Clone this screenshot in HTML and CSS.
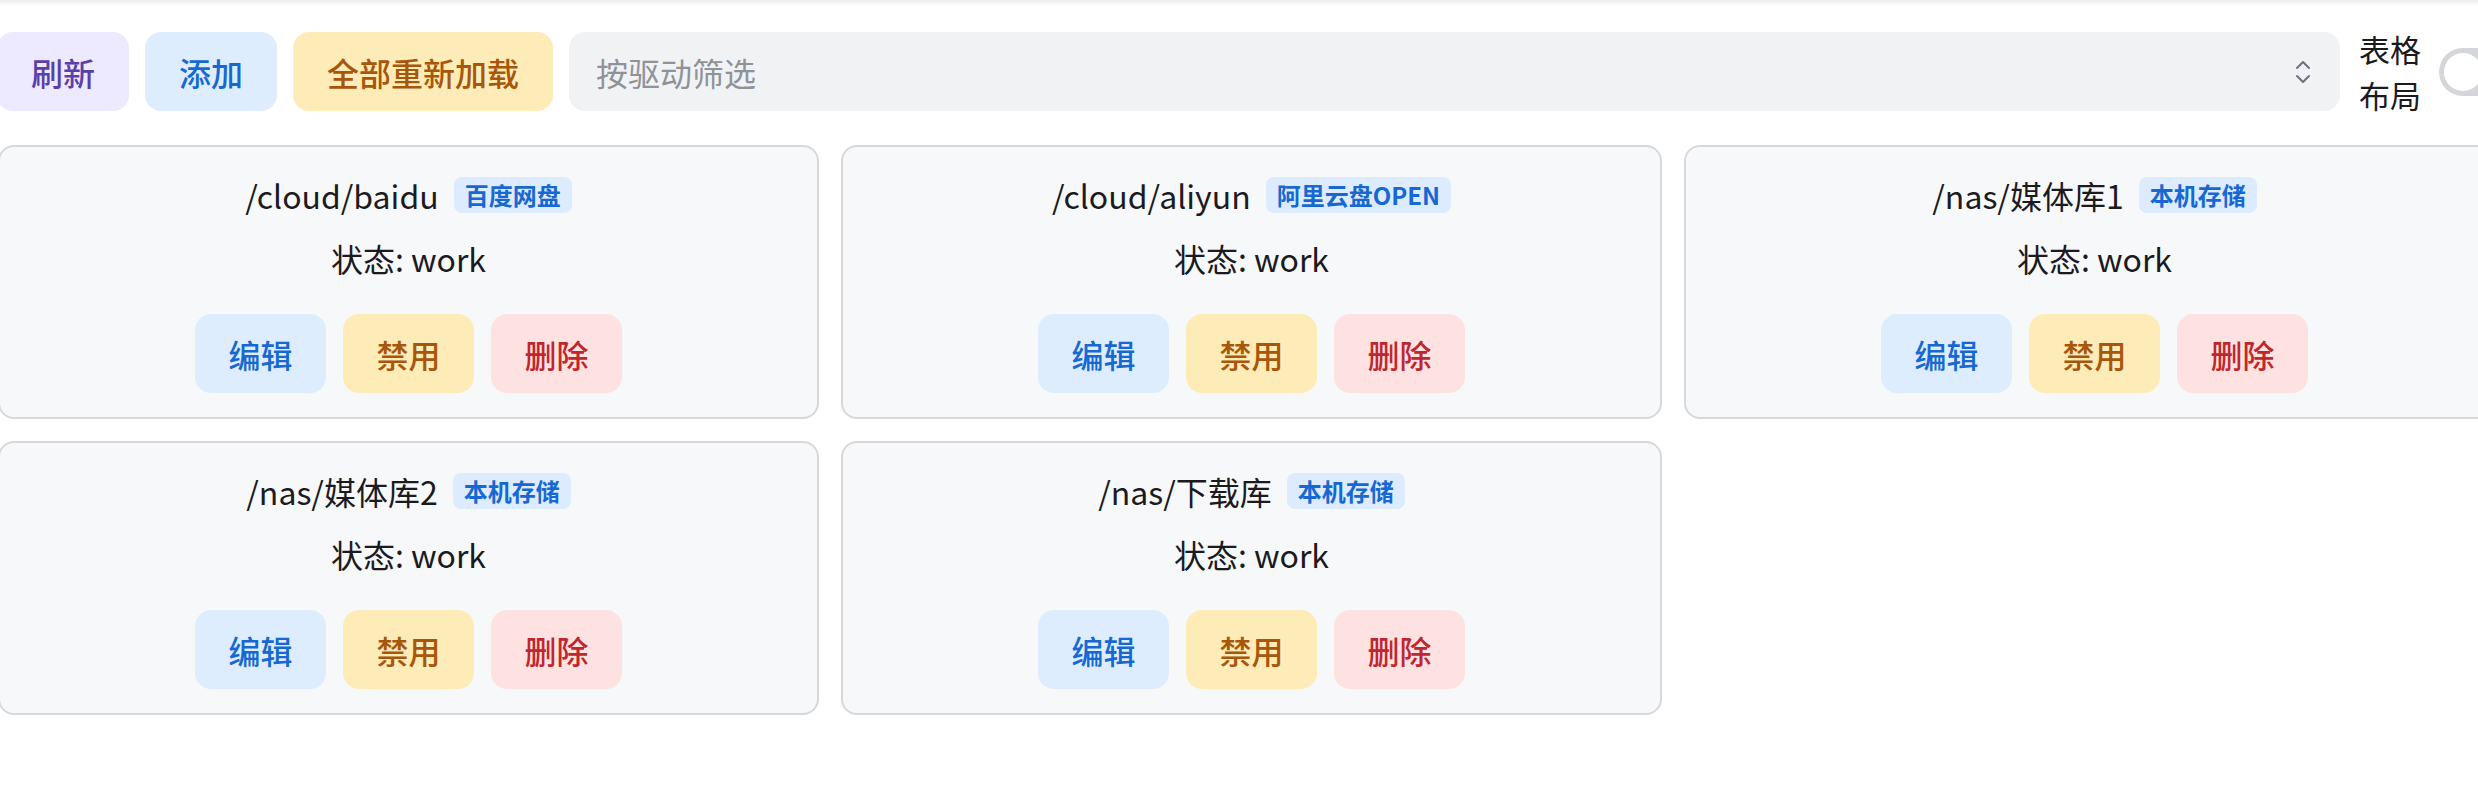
FILE: index.html
```html
<!DOCTYPE html>
<html lang="zh">
<head>
    <meta charset="utf-8">
    <title>存储管理</title>
    <link rel="stylesheet" href="styles.css">
</head>
<body>
<div class="topbar"></div>
<div class="container">
    <div class="toolbar">
        <button class="btn btn-purple">刷新</button>
        <button class="btn btn-blue">添加</button>
        <button class="btn btn-amber">全部重新加载</button>
        <div class="filter">
            <span class="filter-placeholder">按驱动筛选</span>
            <svg class="filter-chevron" width="16" height="24" viewBox="0 0 16 24" fill="none" stroke="#6b7280" stroke-width="2" stroke-linecap="round" stroke-linejoin="round">
                <path d="M2 8 L8 2 L14 8"/>
                <path d="M2 16 L8 22 L14 16"/>
            </svg>
        </div>
        <label class="layout-label" for="layout-toggle">表格布局</label>
        <div class="toggle" id="layout-toggle"><span class="toggle-knob"></span></div>
    </div>

    <div class="storage-grid">
        <div class="storage-card">
            <div class="card-title">
                <span>/cloud/baidu</span>
                <span class="tag">百度网盘</span>
            </div>
            <p class="card-status">状态: work</p>
            <div class="card-actions">
                <button class="btn btn-blue">编辑</button>
                <button class="btn btn-amber">禁用</button>
                <button class="btn btn-red">删除</button>
            </div>
        </div>
        <div class="storage-card">
            <div class="card-title">
                <span>/cloud/aliyun</span>
                <span class="tag">阿里云盘OPEN</span>
            </div>
            <p class="card-status">状态: work</p>
            <div class="card-actions">
                <button class="btn btn-blue">编辑</button>
                <button class="btn btn-amber">禁用</button>
                <button class="btn btn-red">删除</button>
            </div>
        </div>
        <div class="storage-card">
            <div class="card-title">
                <span>/nas/媒体库1</span>
                <span class="tag">本机存储</span>
            </div>
            <p class="card-status">状态: work</p>
            <div class="card-actions">
                <button class="btn btn-blue">编辑</button>
                <button class="btn btn-amber">禁用</button>
                <button class="btn btn-red">删除</button>
            </div>
        </div>
        <div class="storage-card">
            <div class="card-title">
                <span>/nas/媒体库2</span>
                <span class="tag">本机存储</span>
            </div>
            <p class="card-status">状态: work</p>
            <div class="card-actions">
                <button class="btn btn-blue">编辑</button>
                <button class="btn btn-amber">禁用</button>
                <button class="btn btn-red">删除</button>
            </div>
        </div>
        <div class="storage-card">
            <div class="card-title">
                <span>/nas/下载库</span>
                <span class="tag">本机存储</span>
            </div>
            <p class="card-status">状态: work</p>
            <div class="card-actions">
                <button class="btn btn-blue">编辑</button>
                <button class="btn btn-amber">禁用</button>
                <button class="btn btn-red">删除</button>
            </div>
        </div>
    </div>
</div>
</body>
</html>
```

FILE: styles.css
```css
body {
    margin: 0;
    background-color: #fff;
    font-family: "Noto Sans CJK SC", "Noto Sans", sans-serif;
    color: #1b1b1f;
    overflow: hidden;
}
.topbar {
    height: 6px;
    background: linear-gradient(#ececec, #fff);
}
.container {
    width: 2522px;
    margin-left: -3px;
    margin-top: 26px;
}
.toolbar {
    display: flex;
    align-items: center;
    gap: 16px;
    height: 79px;
}
.btn {
    height: 79px;
    padding: 0 34px;
    border: none;
    border-radius: 16px;
    font-family: inherit;
    font-size: 32px;
    font-weight: 500;
    cursor: pointer;
}
.btn-purple {
    background-color: #ede9fe;
    color: #5b3ea8;
}
.btn-blue {
    background-color: #ddedfe;
    color: #1768d2;
}
.btn-amber {
    background-color: #fdebb8;
    color: #a8560a;
}
.btn-red {
    background-color: #fee2e2;
    color: #c0262d;
}
.filter {
    flex: 1;
    height: 79px;
    display: flex;
    align-items: center;
    justify-content: space-between;
    padding: 0 29px 0 27px;
    background-color: #f1f2f4;
    border-radius: 16px;
}
.filter-placeholder {
    font-size: 32px;
    color: #8e9299;
}
.layout-label {
    width: 64px;
    margin-left: 3px;
    font-size: 31px;
    line-height: 46px;
    color: #1b1b1f;
}
.toggle {
    width: 80px;
    height: 48px;
    flex-shrink: 0;
    border-radius: 24px;
    background-color: #d4d6da;
    display: flex;
    align-items: center;
    padding-left: 5px;
    box-sizing: border-box;
}
.toggle-knob {
    width: 38px;
    height: 38px;
    border-radius: 50%;
    background-color: #fff;
}
.storage-grid {
    display: grid;
    grid-template-columns: repeat(3, 821px);
    gap: 22px;
    margin-top: 34px;
    margin-left: 1px;
}
.storage-card {
    display: flex;
    flex-direction: column;
    align-items: center;
    background-color: #f7f8fa;
    border: 2px solid #d6d8dc;
    border-radius: 16px;
    padding: 26px 0 24px;
}
.card-title {
    display: flex;
    align-items: center;
    gap: 15px;
    font-size: 32px;
    line-height: 44px;
}
.tag {
    height: 36px;
    line-height: 36px;
    padding: 0 11px;
    border-radius: 8px;
    background-color: #dcebfd;
    color: #1768d2;
    font-size: 24px;
    font-weight: 600;
}
.card-status {
    margin: 19px 0 0;
    font-size: 32px;
    line-height: 44px;
}
.card-actions {
    display: flex;
    gap: 17px;
    margin-top: 34px;
}
.card-actions .btn {
    width: 131px;
    padding: 0;
}
```
